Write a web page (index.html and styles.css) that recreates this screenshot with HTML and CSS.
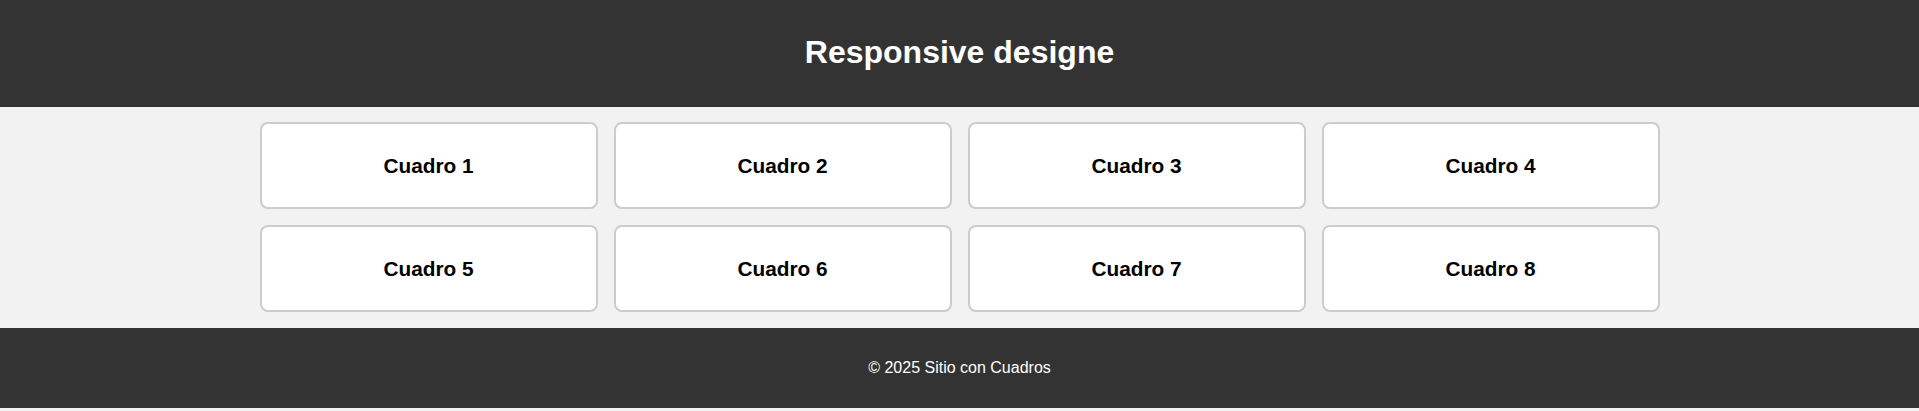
FILE: index.html
```html
<!DOCTYPE html>
<html lang="es">
<head>
    <meta charset="UTF-8">
    <meta name="viewport" content="width=device-width, initial-scale=1.0">
    <title>Responsive designe</title>
    <link rel="stylesheet" href="styles.css">
</head>
<body>
<header class="header">
    <h1>Responsive designe</h1>
</header>
<main class="container">
    <div class="box">Cuadro 1</div>
    <div class="box">Cuadro 2</div>
    <div class="box">Cuadro 3</div>
    <div class="box">Cuadro 4</div>
    <div class="box">Cuadro 5</div>
    <div class="box">Cuadro 6</div>
    <div class="box">Cuadro 7</div>
    <div class="box">Cuadro 8</div>
</main>
<footer class="footer">
    <p>&copy; 2025 Sitio con Cuadros</p>
</footer>
</body>
</html>
```

FILE: styles.css
```css
body {
    margin: 0;
    background-color: #f2f2f2;
    font-family: "Liberation Sans", Arial, sans-serif;
}
.header {
    background-color: #333;
    color: #fff;
    height: 107px;
    display: flex;
    justify-content: center;
    align-items: center;
}
.header h1 {
    margin: 0 0 3px;
    font-size: 32px;
}
.container {
    max-width: 1400px;
    margin: 0 auto;
    padding: 15px 0 16px;
    display: grid;
    grid-template-columns: repeat(4, 1fr);
    gap: 16px;
}
.box {
    background-color: #fff;
    border: 2px solid #ccc;
    border-radius: 8px;
    box-sizing: border-box;
    height: 87px;
    display: flex;
    justify-content: center;
    align-items: center;
    font-size: 20.8px;
    font-weight: bold;
}
.footer {
    background-color: #333;
    color: #fff;
    height: 80px;
    display: flex;
    justify-content: center;
    align-items: center;
    font-size: 16px;
}
.footer p {
    margin: 0;
}
```
